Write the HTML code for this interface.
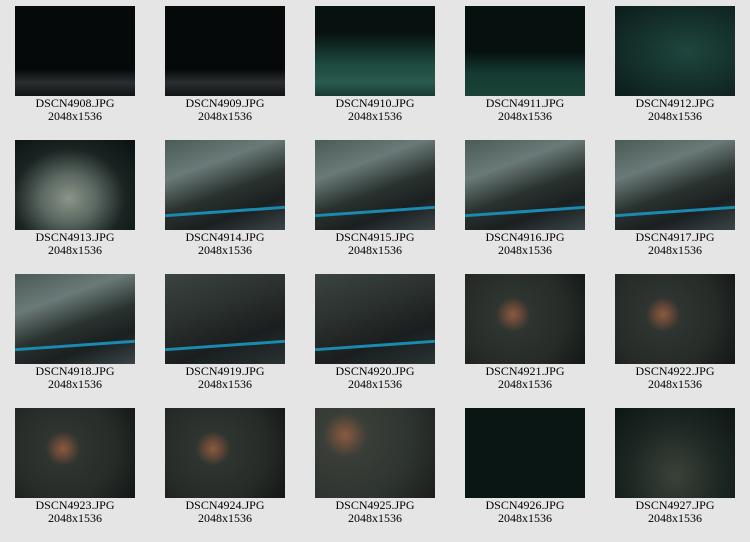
<!DOCTYPE html>
<html><head><style>
body{margin:0;width:750px;height:542px;background:#e5e5e5;position:relative;overflow:hidden;font-family:"Liberation Serif",serif;font-size:12px;color:#000}
.c{position:absolute;width:150px;text-align:center;line-height:13px}
.t{width:120px;height:90px;margin:0 auto 1px;position:relative;overflow:hidden}
.dk{background:radial-gradient(ellipse at 50% 40%,#101a1c,#050808)}
.m{background:linear-gradient(160deg,#4a5a55 0%,#6a7a78 30%,#2a3330 55%,#1a1f20 75%,#3a4548 100%)}
.m:after{content:"";position:absolute;left:0;right:0;top:70px;height:3px;background:#1a8ab0;transform:rotate(-4deg)}
.crab{background:radial-gradient(circle at 40% 45%,#8a5a40 0,#6a4a38 8%,#2e3430 20%,#262b28 60%,#121614 100%)}
</style></head><body>
<div class="c" style="left:0;top:6px"><div class="t dk" style="background:linear-gradient(#05090a 70%,#2a2e30 85%,#101414)"></div>DSCN4908.JPG<br>2048x1536</div>
<div class="c" style="left:150px;top:6px"><div class="t dk" style="background:linear-gradient(#05090a 70%,#2a2e30 85%,#101414)"></div>DSCN4909.JPG<br>2048x1536</div>
<div class="c" style="left:300px;top:6px"><div class="t" style="background:linear-gradient(#071210 30%,#1e4a40 65%,#2a5a4e 85%,#183a32)"></div>DSCN4910.JPG<br>2048x1536</div>
<div class="c" style="left:450px;top:6px"><div class="t" style="background:linear-gradient(#06100f 50%,#153a32 75%,#1a4236)"></div>DSCN4911.JPG<br>2048x1536</div>
<div class="c" style="left:600px;top:6px"><div class="t" style="background:radial-gradient(ellipse at 60% 50%,#1e463e,#0c1c1a)"></div>DSCN4912.JPG<br>2048x1536</div>

<div class="c" style="left:0;top:140px"><div class="t" style="background:radial-gradient(ellipse at 45% 65%,#8a9688 0,#5a6660 30%,#1a2422 60%,#0a1012 100%)"></div>DSCN4913.JPG<br>2048x1536</div>
<div class="c" style="left:150px;top:140px"><div class="t m"></div>DSCN4914.JPG<br>2048x1536</div>
<div class="c" style="left:300px;top:140px"><div class="t m"></div>DSCN4915.JPG<br>2048x1536</div>
<div class="c" style="left:450px;top:140px"><div class="t m"></div>DSCN4916.JPG<br>2048x1536</div>
<div class="c" style="left:600px;top:140px"><div class="t m"></div>DSCN4917.JPG<br>2048x1536</div>

<div class="c" style="left:0;top:274px"><div class="t m"></div>DSCN4918.JPG<br>2048x1536</div>
<div class="c" style="left:150px;top:274px"><div class="t m" style="background:linear-gradient(160deg,#3a4440,#2a302e 40%,#1a1e1e 70%,#2a3234)"></div>DSCN4919.JPG<br>2048x1536</div>
<div class="c" style="left:300px;top:274px"><div class="t m" style="background:linear-gradient(160deg,#3a4440,#2a302e 40%,#1a1e1e 70%,#2a3234)"></div>DSCN4920.JPG<br>2048x1536</div>
<div class="c" style="left:450px;top:274px"><div class="t crab"></div>DSCN4921.JPG<br>2048x1536</div>
<div class="c" style="left:600px;top:274px"><div class="t crab"></div>DSCN4922.JPG<br>2048x1536</div>

<div class="c" style="left:0;top:408px"><div class="t crab"></div>DSCN4923.JPG<br>2048x1536</div>
<div class="c" style="left:150px;top:408px"><div class="t crab"></div>DSCN4924.JPG<br>2048x1536</div>
<div class="c" style="left:300px;top:408px"><div class="t crab" style="background:radial-gradient(circle at 25% 30%,#8a5a40 0,#3a3e38 20%,#2e3430 60%,#1a1e1c 100%)"></div>DSCN4925.JPG<br>2048x1536</div>
<div class="c" style="left:450px;top:408px"><div class="t" style="background:#0a1614"></div>DSCN4926.JPG<br>2048x1536</div>
<div class="c" style="left:600px;top:408px"><div class="t" style="background:radial-gradient(ellipse at 50% 75%,#3a4238,#1a2420 60%,#0e1614)"></div>DSCN4927.JPG<br>2048x1536</div>
</body></html>
